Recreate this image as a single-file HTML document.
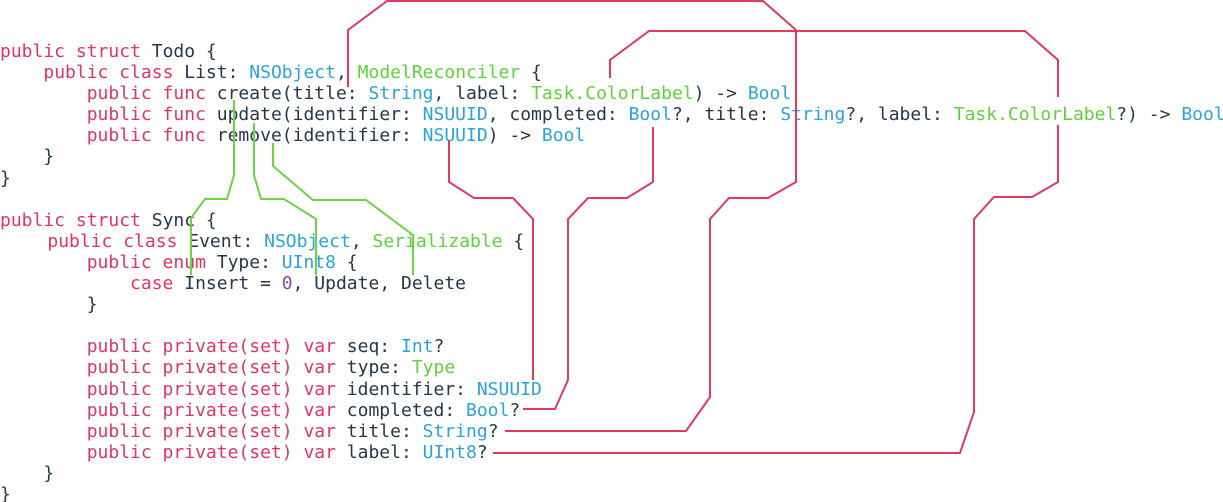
<!DOCTYPE html>
<html><head><meta charset="utf-8"><style>
html,body{margin:0;padding:0;background:#fff;width:1223px;height:502px;overflow:hidden;position:relative}
pre{position:absolute;left:0;top:41px;margin:0;font-family:"DejaVu Sans Mono","Liberation Mono",monospace;font-size:18px;line-height:21.1px;color:#26374a;z-index:1}
.k{color:#e0365e}.t{color:#2aa3dc}.g{color:#5ed23d}.n{color:#8e44ad}
svg{position:absolute;left:0;top:0;z-index:2}
</style></head><body>
<pre><span class="k">public struct</span> Todo {
    <span class="k">public class</span> List: <span class="t">NSObject</span>, <span class="g">ModelReconciler</span> {
        <span class="k">public func</span> create(title: <span class="t">String</span>, label: <span class="g">Task.ColorLabel</span>) -&gt; <span class="t">Bool</span>
        <span class="k">public func</span> update(identifier: <span class="t">NSUUID</span>, completed: <span class="t">Bool</span>?, title: <span class="t">String</span>?, label: <span class="g">Task.ColorLabel</span>?) -&gt; <span class="t">Bool</span>
        <span class="k">public func</span> remove(identifier: <span class="t">NSUUID</span>) -&gt; <span class="t">Bool</span>
    }
}

<span class="k">public struct</span> Sync {
    <span style="margin-left:4px"></span><span class="k">public class</span> Event: <span class="t">NSObject</span>, <span class="g">Serializable</span> {
        <span class="k">public enum</span> Type: <span class="t">UInt8</span> {
            <span class="k">case</span> Insert = <span class="n">0</span>, Update, Delete
        }

        <span class="k">public private(set) var</span> seq: <span class="t">Int</span>?
        <span class="k">public private(set) var</span> type: <span class="g">Type</span>
        <span class="k">public private(set) var</span> identifier: <span class="t">NSUUID</span>
        <span class="k">public private(set) var</span> completed: <span class="t">Bool</span>?
        <span class="k">public private(set) var</span> title: <span class="t">String</span>?
        <span class="k">public private(set) var</span> label: <span class="t">UInt8</span>?
    }
}</pre>
<svg width="1223" height="502" viewBox="0 0 1223 502" fill="none" stroke-width="2" stroke-linejoin="miter">
<g stroke="#6bd444">
<polyline points="234,100 234,175 227,199 205,199 191,218 191,275"/>
<polyline points="254,123 254,175 261,199 284,199 316,219 316,275"/>
<polyline points="273,143 273,166 313,200 366,200 413,235 413,275"/>
</g>
<g stroke="#e03a5e">
<polyline points="348,87 348,30 387,1 763,1 796,30 796,182 768,198 729,198 710,219 710,397 686,431 505,431"/>
<polyline points="449,140 449,182 474,198 513,198 533,219 533,380"/>
<polyline points="653,127 653,182 627,198 588,198 568,219 568,380 555,409 523,409"/>
<polyline points="610,78 610,60 649,31 1025,31 1058,60 1058,97"/>
<polyline points="1058,125 1058,182 1032,197 994,197 974,219 974,412 960,453 493,453"/>
</g>
</svg>
</body></html>
